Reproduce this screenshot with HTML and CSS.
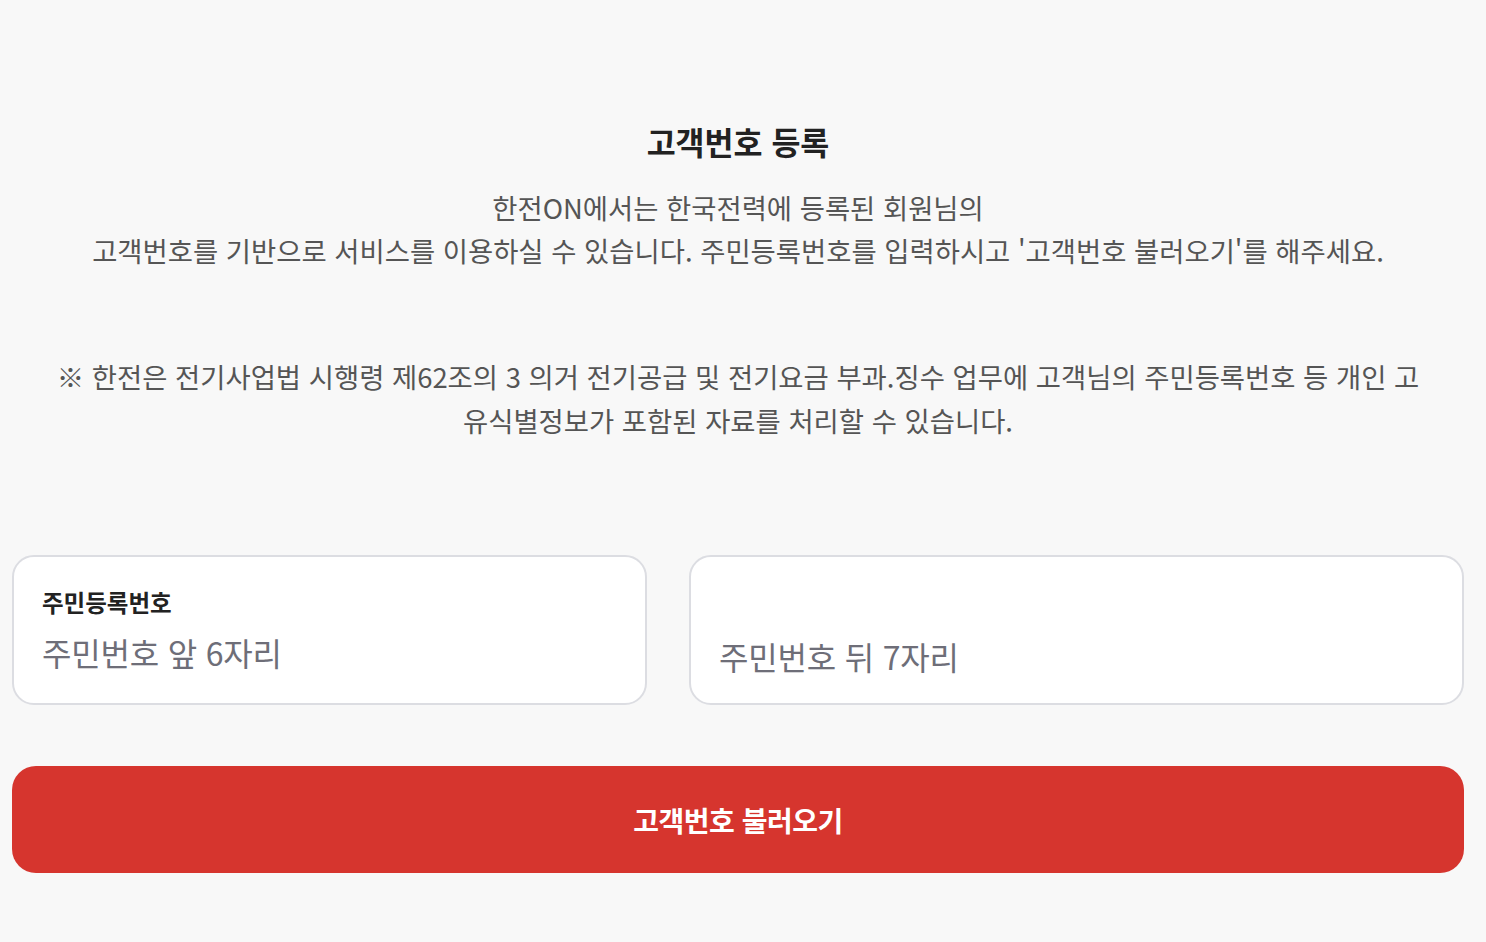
FILE: index.html
```html
<!DOCTYPE html>
<html lang="ko">
<head>
<meta charset="utf-8">
<link rel="stylesheet" href="styles.css">
</head>
<body>
<main class="page">
  <h1 class="title">고객번호 등록</h1>
  <p class="desc">한전ON에서는 한국전력에 등록된 회원님의<br>고객번호를 기반으로 서비스를 이용하실 수 있습니다. 주민등록번호를 입력하시고 '고객번호 불러오기'를 해주세요.</p>
  <p class="notice">※ 한전은 전기사업법 시행령 제62조의 3 의거 전기공급 및 전기요금 부과.징수 업무에 고객님의 주민등록번호 등 개인 고유식별정보가 포함된 자료를 처리할 수 있습니다.</p>
  <div class="fields">
    <label class="field field-front">
      <span class="field-label">주민등록번호</span>
      <input class="field-input" type="text" placeholder="주민번호 앞 6자리">
    </label>
    <label class="field field-back">
      <input class="field-input" type="password" placeholder="주민번호 뒤 7자리">
    </label>
  </div>
  <button class="submit" type="button">고객번호 불러오기</button>
</main>
</body>
</html>
```
FILE: styles.css
```css
html, body {
  margin: 0;
  padding: 0;
  background: #f8f8f8;
}
body {
  font-family: "Noto Sans CJK KR", "Noto Sans", sans-serif;
  color: #222;
}
.page {
  display: flex;
  flex-direction: column;
  align-items: stretch;
  padding: 118px 22px 0 12px;
}
.title {
  margin: 0;
  text-align: center;
  font-size: 31.5px;
  font-weight: 700;
  line-height: 46px;
  color: #222;
}
.desc {
  margin: 22px 0 0;
  text-align: center;
  font-size: 27.4px;
  line-height: 43px;
  color: #555;
}
.notice {
  margin: 82px 0 0;
  padding: 0 36px;
  text-align: center;
  font-size: 27.4px;
  line-height: 44px;
  color: #555;
}
.fields {
  display: grid;
  grid-template-columns: minmax(0, 635fr) minmax(0, 775fr);
  gap: 42px;
  margin-top: 113px;
}
.field {
  box-sizing: border-box;
  height: 150px;
  background: #fff;
  border: 2px solid #dcdde2;
  border-radius: 22px;
  display: flex;
  flex-direction: column;
  justify-content: flex-start;
  padding: 30px 28px 0;
}
.field-back {
  padding-top: 77px;
}
.field-label {
  font-size: 23.5px;
  font-weight: 700;
  color: #222;
  line-height: 30px;
}
.field-input {
  border: none;
  outline: none;
  background: transparent;
  font-family: inherit;
  font-size: 32px;
  color: #222;
  padding: 0;
  margin: 13px 0 0;
  height: 44px;
  line-height: 44px;
  letter-spacing: -0.2px;
}
.field-back .field-input {
  margin-top: 0;
}
.field-input::placeholder {
  color: #6e6e78;
}
.submit {
  margin-top: 61px;
  height: 107px;
  border: none;
  border-radius: 24px;
  background: #d6352e;
  color: #fff;
  font-family: inherit;
  font-size: 28px;
  font-weight: 700;
  letter-spacing: -0.5px;
}
```
